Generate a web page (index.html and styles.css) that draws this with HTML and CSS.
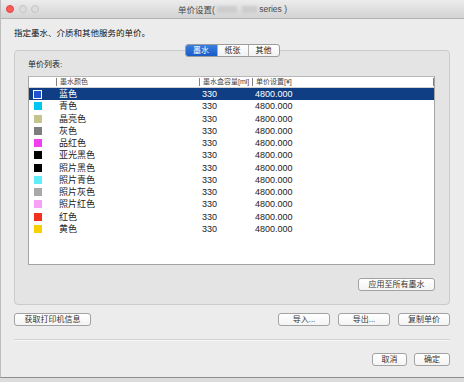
FILE: index.html
```html
<!DOCTYPE html>
<html lang="zh-CN">
<head>
    <meta charset="UTF-8">
    <title>单价设置</title>
    <link rel="stylesheet" href="styles.css">
</head>
<body>
    <div class="window">
        <div class="titlebar">
            <div class="lights">
                <span class="light close"></span>
                <span class="light"></span>
                <span class="light"></span>
            </div>
            <div class="title">单价设置(<span class="blur w1"></span><span class="blur w2"></span> series )</div>
            <div></div>
        </div>
        <div class="content">
            <p class="intro">指定墨水、介质和其他服务的单价。</p>
            <div class="tabs">
                <div class="tab-group">
                    <div class="tab active">墨水</div>
                    <div class="tab">纸张</div>
                    <div class="tab">其他</div>
                </div>
            </div>
            <div class="group">
                <div class="group-label">单价列表:</div>
                <div class="table">
                    <div class="row thead">
                        <div class="cell"></div>
                        <div class="cell">墨水颜色</div>
                        <div class="cell">墨水盒容量[ml]</div>
                        <div class="cell">单价设置[¥]</div>
                    </div>
                    <div class="tbody" id="tbody"></div>
                </div>
                <div class="group-actions">
                    <button class="btn apply-btn">应用至所有墨水</button>
                </div>
            </div>
            <div class="button-row">
                <button class="btn info-btn">获取打印机信息</button>
                <div class="right-btns">
                    <button class="btn file-btn">导入...</button>
                    <button class="btn file-btn">导出...</button>
                    <button class="btn file-btn">复制单价</button>
                </div>
            </div>
            <hr class="sep">
            <div class="footer">
                <button class="btn cancel-btn">取消</button>
                <button class="btn ok-btn">确定</button>
            </div>
        </div>
    </div>

    <script>
        const inks = [
            ['蓝色', '#2453d2'],
            ['青色', '#00c6f6'],
            ['晶亮色', '#c6c48e'],
            ['灰色', '#7e7e7e'],
            ['品红色', '#f03ef0'],
            ['亚光黑色', '#000000'],
            ['照片黑色', '#000000'],
            ['照片青色', '#62eef8'],
            ['照片灰色', '#a9a9a9'],
            ['照片红色', '#f6a0f6'],
            ['红色', '#f2301e'],
            ['黄色', '#f8d000']
        ];
        const tbody = document.getElementById('tbody');
        inks.forEach(([name, color], i) => {
            const row = document.createElement('div');
            row.className = 'row' + (i === 0 ? ' selected' : '');
            row.innerHTML =
                '<div class="cell"><span class="swatch" style="background:' + color + '"></span></div>' +
                '<div class="cell">' + name + '</div>' +
                '<div class="cell">330</div>' +
                '<div class="cell">4800.000</div>';
            tbody.appendChild(row);
        });
    </script>
</body>
</html>
```

FILE: styles.css
```css
body, html {
    margin: 0;
    padding: 0;
    background: #dcdcdc;
    font-family: "Liberation Sans", "Noto Sans CJK SC", sans-serif;
}
.window {
    width: 464px;
    height: 378px;
    box-sizing: border-box;
    background: #ececec;
    border-left: 1px solid #bcbcbc;
    border-bottom: 1px solid #8e8e8e;
    display: flex;
    flex-direction: column;
}
.titlebar {
    height: 18px;
    flex-shrink: 0;
    border-bottom: 1px solid #b3b3b3;
    background: linear-gradient(#ececec, #d3d3d3);
    display: grid;
    grid-template-columns: 1fr auto 1fr;
    align-items: center;
}
.lights {
    display: flex;
    gap: 4.5px;
    padding-left: 5px;
}
.light {
    width: 8px;
    height: 8px;
    box-sizing: border-box;
    border-radius: 50%;
    background: #dcdcdc;
    border: 1px solid #c4c4c4;
}
.light.close {
    background: #fc5b57;
    border-color: #de4440;
}
.title {
    font-size: 8.5px;
    color: #4a4a4a;
    display: flex;
    align-items: center;
    white-space: pre;
}
.blur {
    display: inline-block;
    height: 7px;
    background: #cdcdcd;
    filter: blur(1px);
    margin-left: 2px;
}
.blur.w1 { width: 20px; }
.blur.w2 { width: 15px; margin-left: 5px; }
.content {
    padding: 8px 14px 0 13px;
}
.intro {
    margin: 0;
    font-size: 8.5px;
    line-height: 12px;
    color: #111;
}
.tabs {
    display: flex;
    justify-content: center;
    margin-top: 5px;
    position: relative;
    z-index: 1;
}
.tab-group {
    display: flex;
    border: 1px solid #9c9c9c;
    border-radius: 3px;
    overflow: hidden;
    background: linear-gradient(#ffffff, #f2f2f2);
}
.tab {
    width: 30px;
    height: 11px;
    font-size: 8px;
    line-height: 11px;
    text-align: center;
    color: #222;
    border-left: 1px solid #aeaeae;
}
.tab:first-child {
    width: 31px;
    border-left: none;
}
.tab.active {
    background: linear-gradient(#3a7ee0, #175bc6);
    color: #fff;
}
.group {
    margin-top: -7px;
    border: 1px solid #cbcbcb;
    border-radius: 4px;
    background: #e4e4e4;
    padding: 8px 14px 13px 13px;
}
.group-label {
    font-size: 8px;
    line-height: 12px;
    color: #222;
    margin-bottom: 5px;
}
.table {
    height: 189px;
    box-sizing: border-box;
    border: 1px solid #a4a4a4;
    border-top-color: #b8b8b8;
    background: #fff;
}
.row {
    display: grid;
    grid-template-columns: 27px 143px 53px 1fr;
    height: 12.25px;
    font-size: 9px;
    line-height: 12.25px;
    color: #222;
}
.row .cell:nth-child(n+2) {
    padding-left: 3px;
    white-space: nowrap;
}
.row .cell:first-child {
    display: flex;
    align-items: center;
    padding-left: 5px;
}
.thead {
    height: 10px;
    line-height: 10px;
    font-size: 7px;
    color: #444;
    border-bottom: 1px solid #d2d2d2;
}
.thead .cell:nth-child(n+2) {
    border-left: 1px solid #808080;
    padding-left: 3px;
    margin: 1px 0;
    line-height: 8px;
}
.thead .cell:last-child {
    border-right: 1px solid #808080;
}
.row.selected {
    background: #0f3e84;
    color: #fff;
}
.swatch {
    width: 8px;
    height: 8px;
    display: block;
}
.selected .swatch {
    width: 9px;
    height: 9px;
    box-sizing: border-box;
    border: 1px solid #fff;
    margin-left: -1px;
}
.group-actions {
    display: flex;
    justify-content: flex-end;
    margin-top: 13px;
}
.btn {
    height: 13px;
    box-sizing: border-box;
    padding: 0;
    border: 1px solid #a2a2a2;
    border-radius: 3px;
    background: linear-gradient(#ffffff, #f4f4f4);
    font-family: "Liberation Sans", "Noto Sans CJK SC", sans-serif;
    font-size: 8px;
    line-height: 11px;
    color: #333;
}
.apply-btn { width: 77px; }
.info-btn { width: 77px; }
.file-btn { width: 52px; }
.cancel-btn { width: 35px; }
.ok-btn { width: 36px; }
.button-row {
    display: flex;
    justify-content: space-between;
    margin-top: 8px;
}
.right-btns {
    display: flex;
    gap: 8px;
}
.sep {
    margin: 13px 0 0;
    border: none;
    height: 1px;
    background: #d2d2d2;
    border-bottom: 1px solid #f6f6f6;
}
.footer {
    display: flex;
    justify-content: flex-end;
    gap: 7px;
    margin-top: 12px;
}
```
